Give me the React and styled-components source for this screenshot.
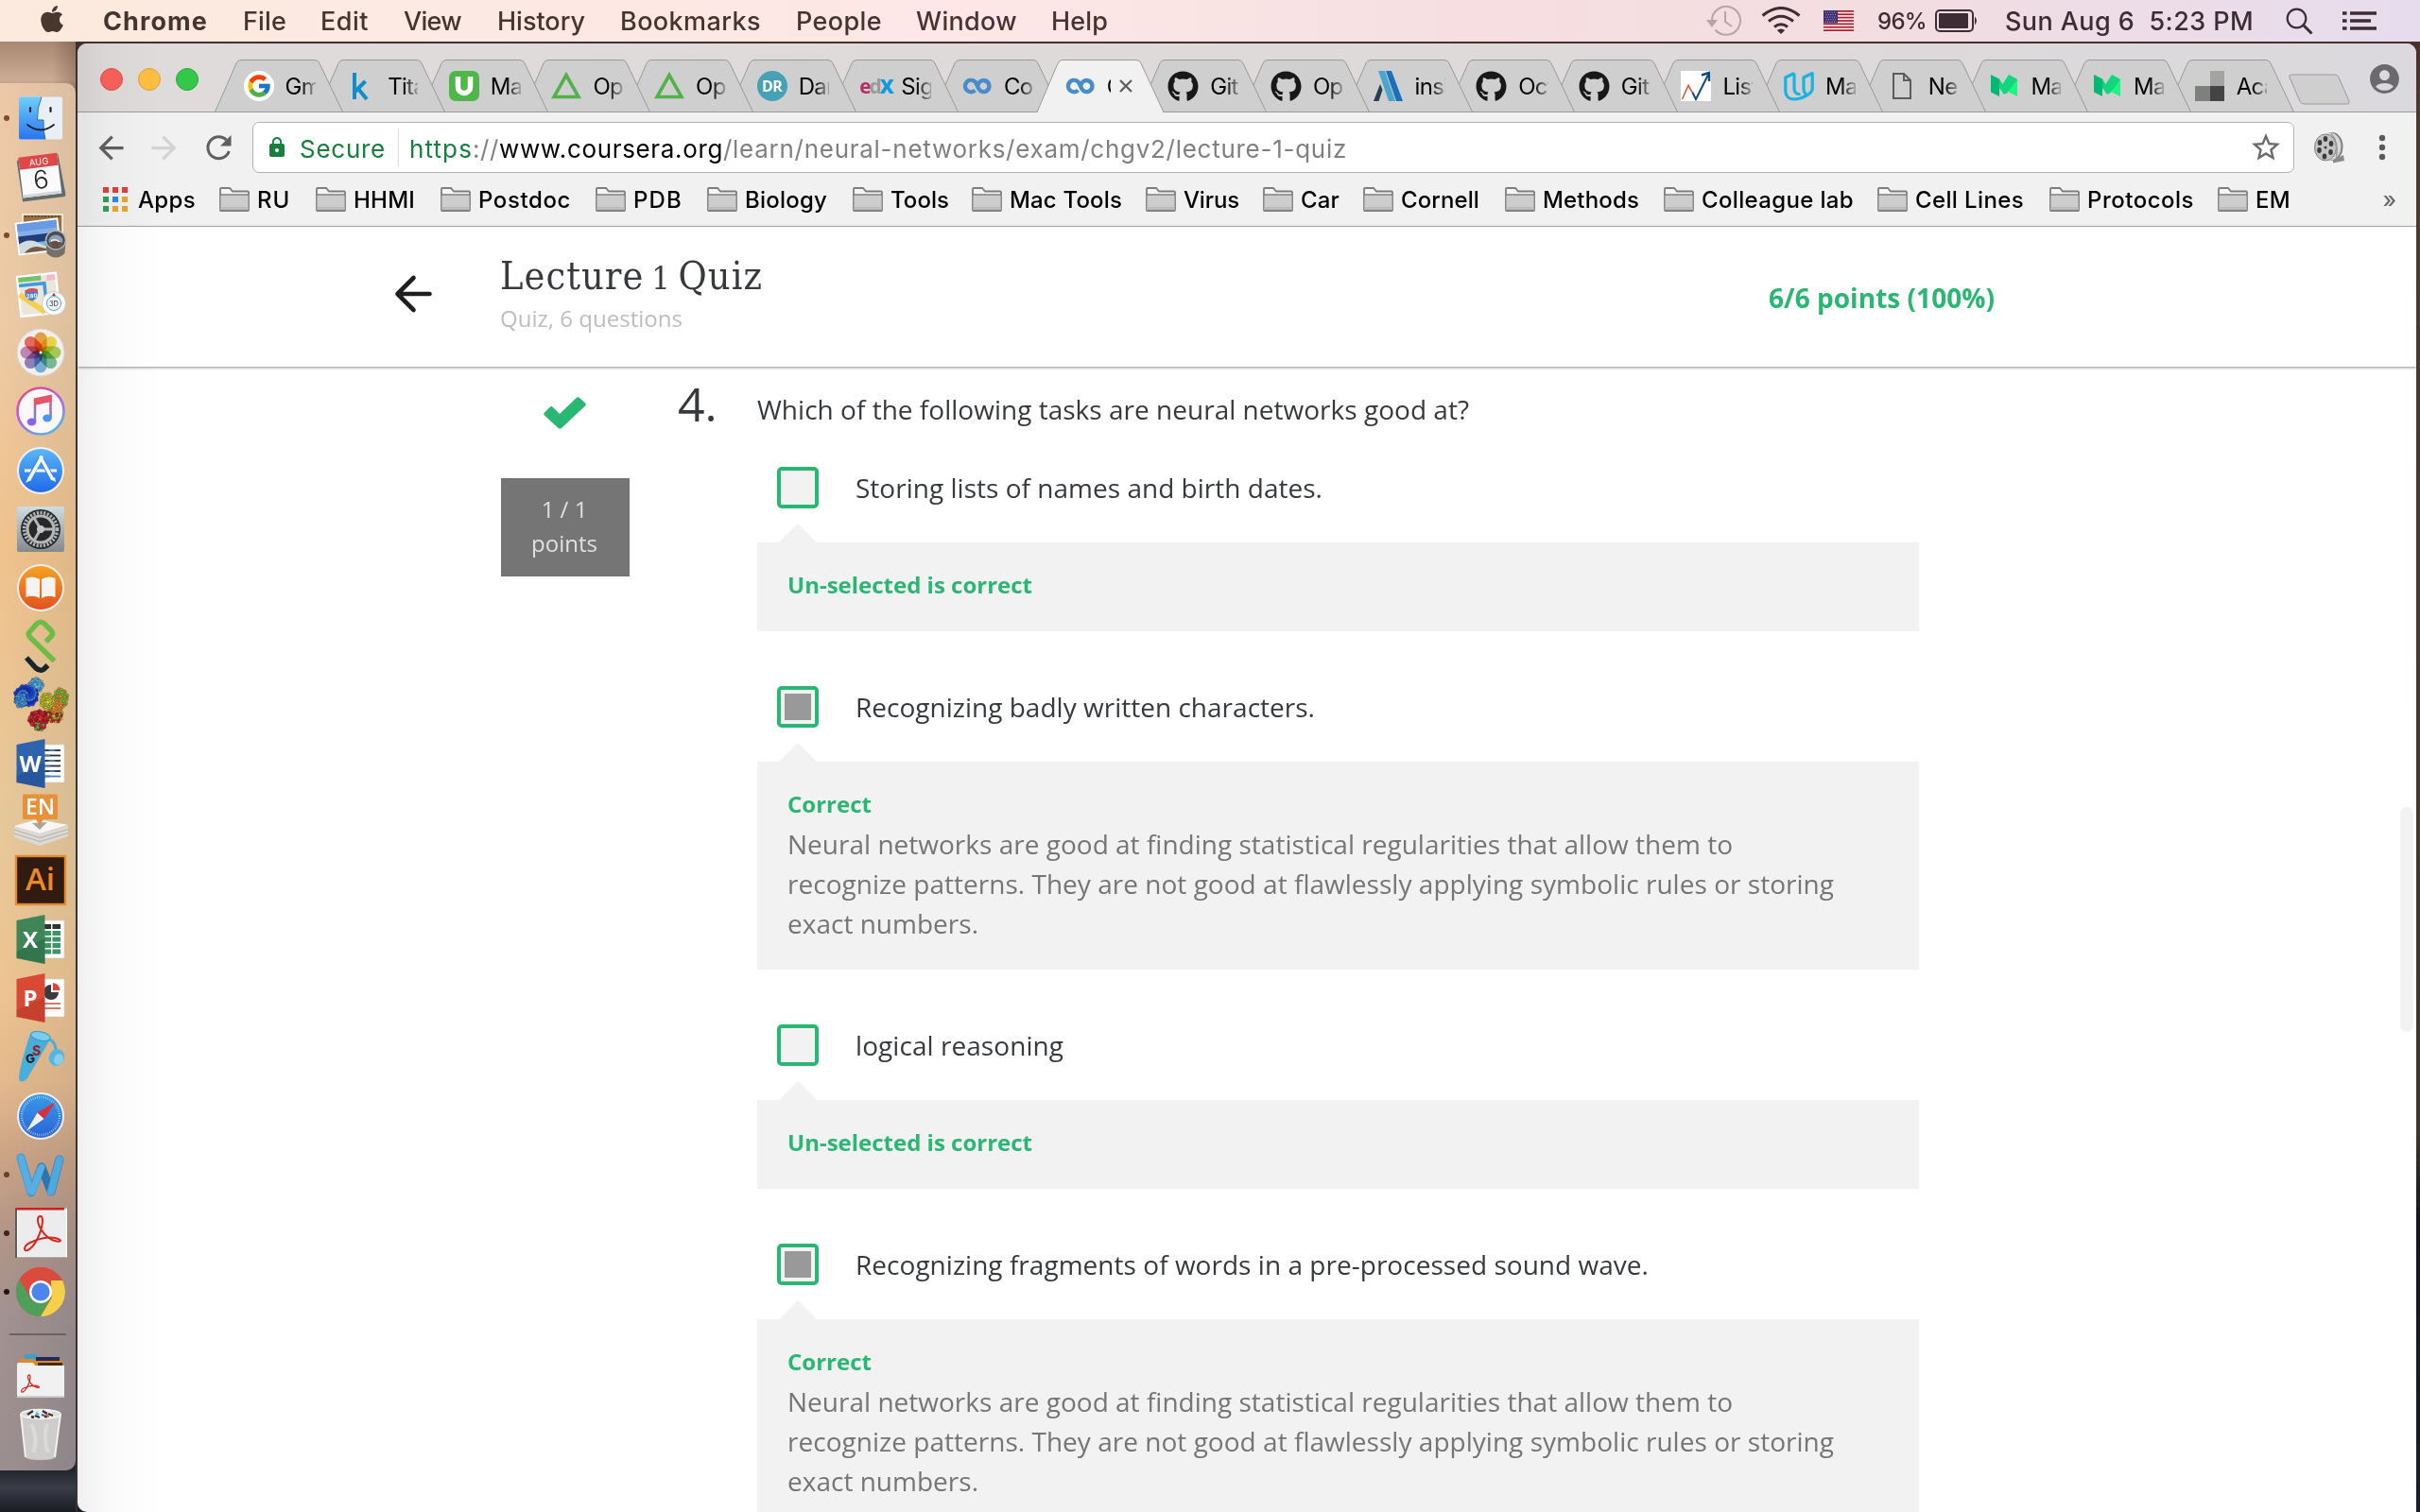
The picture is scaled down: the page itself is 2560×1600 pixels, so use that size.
import React, { useLayoutEffect, useRef } from "react";
import styled, { createGlobalStyle } from "styled-components";
import { FaApple, FaGithub } from "react-icons/fa";
import { FcGoogle } from "react-icons/fc";
import { MdStarBorder, MdAccountCircle, MdLock, MdArrowBack, MdArrowForward } from "react-icons/md";

const ui = `Inter, "Liberation Sans", sans-serif`;
const body = `"Open Sans", "Noto Sans", sans-serif`;
const green = "#2ab673";

const GlobalStyle = createGlobalStyle`
  * { box-sizing: border-box; }
  html, body { margin: 0; padding: 0; overflow: hidden; }
  svg { display: block; flex: none; }
`;

/* ---------- text that is tracked to an exact width ---------- */
const Tracked = styled.span`
  display: inline-block;
  flex: none;
  white-space: pre;
`;

function Fit({ w, children, ...rest }) {
  const ref = useRef(null);
  useLayoutEffect(() => {
    const el = ref.current;
    el.style.width = "auto";
    el.style.letterSpacing = "0px";
    const natural = el.getBoundingClientRect().width;
    el.style.letterSpacing = (w - natural) / el.textContent.length + "px";
    el.style.width = w + "px";
  }, [w, children]);
  return (
    <Tracked ref={ref} {...rest}>
      {children}
    </Tracked>
  );
}

/* ---------- desktop ---------- */
const Desktop = styled.div`
  width: 2560px;
  height: 1600px;
  overflow: hidden;
  display: flex;
  flex-direction: column;
  font-family: ${ui};
  background: linear-gradient(180deg, #46302e 0, #46302e 46px, #4a3a34 120px, #3c3630 1200px, #14161b 1290px, #1b1e26 1600px);
`;

const MenuBar = styled.header`
  height: 44px;
  flex: none;
  display: flex;
  align-items: center;
  justify-content: space-between;
  padding: 0 46px 0 42px;
  color: #48332f;
  font-size: 27px;
  background: linear-gradient(90deg, #fbeadd 0, #fdeae3 400px, #fee7e6 1000px, #f6dee0 1650px, #f2dde1 2000px, #e7dcee 2560px);
`;

const MenuItems = styled.nav`
  display: flex;
  align-items: center;
`;

const AppleMark = styled.span`
  margin: -4px 0 0 -3px;
  color: #48372f;
`;

const MenuItem = styled(Fit)`
  margin-left: ${(p) => p.$gap}px;
  font-weight: ${(p) => (p.$bold ? 700 : 500)};
`;

const StatusItems = styled.div`
  display: flex;
  align-items: center;
  color: #3e2c35;
`;

const StatusIcon = styled.span`
  margin-right: ${(p) => p.$after || 0}px;
`;

const StatusText = styled(Fit)`
  font-size: ${(p) => p.$size}px;
  margin: ${(p) => p.$margin};
  font-weight: ${(p) => p.$weight || 400};
`;

const Workspace = styled.div`
  flex: 1;
  min-height: 0;
  display: flex;
`;

/* ---------- dock ---------- */
const DockColumn = styled.aside`
  width: 82px;
  flex: none;
  padding-top: 44px;
  background: linear-gradient(90deg, rgba(60, 40, 30, 0) 55px, rgba(60, 40, 30, 0.3) 82px) top / 100% 56px no-repeat,
    linear-gradient(180deg, #a98873 0, #cbab92 40px, #a58a76 56px, #3a322e 60px, #3c3630 1180px, #0f1115 1260px, #15171c 1500px, #3a3d49 1530px, #1a1c22 1556px);
  border-right: 2px solid #3a322e;
`;

const Dock = styled.div`
  width: 80px;
  height: 1468px;
  padding-top: 6px;
  border-radius: 0 10px 10px 0;
  background: linear-gradient(90deg, rgba(255, 220, 180, 0.14), rgba(150, 150, 140, 0.16)),
    linear-gradient(180deg, #eac5a6 0, #ebc8a2 250px, #eebe86 500px, #e4c596 780px, #ebc08c 960px, #dfb386 1060px, #c29a7e 1140px, #a68a80 1220px, #94868a 1300px, #8c828a 1468px);
`;

const DockItem = styled.div`
  height: 62.1px;
`;

const DockDivider = styled.div`
  height: 2px;
  margin: 13px 10px 12px;
  background: #6f6065;
`;

/* ---------- browser window ---------- */
const Window = styled.main`
  position: relative;
  width: 2474px;
  margin-top: 2px;
  border-radius: 10px 10px 0 10px;
  overflow: hidden;
  display: flex;
  flex-direction: column;
  background: #fff;
`;

const EdgeShade = styled.div`
  position: absolute;
  inset: 0 auto 0 0;
  width: 90px;
  pointer-events: none;
  background: linear-gradient(90deg, rgba(0, 0, 0, 0.06), rgba(0, 0, 0, 0.025) 30px, rgba(0, 0, 0, 0.01) 55px, rgba(0, 0, 0, 0));
`;

const TabStrip = styled.div`
  height: 73px;
  flex: none;
  display: flex;
  padding: 17px 20px 0 24px;
  background: linear-gradient(#9b9b9b, #9b9b9b) bottom / 100% 1px no-repeat, linear-gradient(90deg, #dedbda, #dfdada 60%, #dbd9dd);
`;

const Lights = styled.div`
  display: flex;
  gap: 16px;
  width: 120.5px;
  padding-top: 9px;
`;

const Light = styled.span`
  width: 24px;
  height: 24px;
  border-radius: 50%;
  background: ${(p) => p.$color};
  border: 1px solid ${(p) => p.$edge};
`;

const TabBox = styled.div`
  position: relative;
  z-index: ${(p) => p.$z};
  width: 136px;
  height: 56px;
  margin-right: -27.37px;
  flex: none;
  display: flex;
  align-items: center;
  padding-left: 31px;
  gap: 12px;
`;

const TabShape = styled.svg`
  position: absolute;
  inset: 0;
  z-index: -1;
`;

const TabTitle = styled.span`
  width: ${(p) => p.$w || 32}px;
  overflow: hidden;
  white-space: nowrap;
  font-size: 24px;
  letter-spacing: -0.7px;
  color: #000;
  mask-image: linear-gradient(90deg, #000 ${(p) => (p.$w ? 90 : 50)}%, rgba(0, 0, 0, 0.2) 100%);
`;

const CloseIcon = styled.svg`
  margin-left: -3px;
`;

const NewTab = styled.div`
  padding: 15px 0 0 21px;
`;

const Account = styled.div`
  margin-left: auto;
  margin-right: -5px;
  padding-top: 2px;
  color: #6a6a6c;
`;

const Toolbar = styled.div`
  height: 64px;
  flex: none;
  display: flex;
  align-items: center;
  padding: 10px 0 0 16px;
  background: #f1f1f1;
`;

const NavIcon = styled.span`
  width: ${(p) => p.$w}px;
  padding-left: ${(p) => p.$inset || 0}px;
  flex: none;
  color: ${(p) => p.$color};
`;

const Omnibox = styled.div`
  width: 2160px;
  height: 54px;
  flex: none;
  display: flex;
  align-items: center;
  padding: 0 11px 0 13px;
  border: 1px solid #b2b2b2;
  border-radius: 7px;
  background: #fff;
  font-size: 26px;
`;

const Secure = styled(Fit)`
  margin: 2px 13px 0 12px;
  color: #17803f;
`;

const Separator = styled.span`
  width: 1px;
  height: 40px;
  margin-right: 11px;
  background: #ddd;
`;

const UrlPart = styled(Fit)`
  margin-top: 2px;
  color: ${(p) => p.$color};
`;

const StarWrap = styled.span`
  margin-left: auto;
  color: #6b6b6b;
`;

const BookmarkBar = styled.div`
  height: 57px;
  flex: none;
  display: flex;
  align-items: center;
  padding-left: 27px;
  background: #f1f1f1;
  border-bottom: 1px solid #b2b2b2;
  font-size: 24px;
  font-weight: 500;
  color: #000;
`;

const Bookmark = styled.div`
  display: flex;
  align-items: center;
  gap: ${(p) => p.$gap || 8}px;
  width: ${(p) => p.$w}px;
  flex: none;
`;

const More = styled.span`
  margin-left: auto;
  padding-right: 21px;
  font-size: 24px;
  color: #6b6b6b;
`;

/* ---------- quiz page ---------- */
const PageHeader = styled.section`
  position: relative;
  height: 148px;
  flex: none;
  display: flex;
  padding-left: 335px;
  font-family: ${body};
  background: #fff;
  box-shadow: 0 1px 3px rgba(0, 0, 0, 0.45);
`;

const BackArrow = styled.div`
  width: 112px;
  padding-top: 50px;
`;

const Titles = styled.div`
  width: 1342px;
  padding-top: 25px;
`;

const Title = styled.h1`
  margin: 0;
  height: 55px;
  line-height: 55px;
  font-family: "DejaVu Serif Condensed", "DejaVu Serif", serif;
  font-stretch: condensed;
  font-weight: 400;
  font-size: 41px;
  word-spacing: -5px;
  color: #373a3c;

  small { font-size: 34px; }
`;

const Subtitle = styled.div`
  line-height: 34px;
  font-size: 24px;
  color: #bdbdbd;
`;

const Score = styled.div`
  padding-top: 54px;
  line-height: 42px;
  font-size: 28px;
  font-weight: 700;
  color: ${green};
`;

const Quiz = styled.section`
  flex: 1;
  min-height: 0;
  display: grid;
  grid-template-columns: 136px 51px 84px 1229px;
  padding-left: 448px;
  font-family: ${body};
  color: #373a3c;
`;

const Grade = styled.div`
  padding-top: 32px;
`;

const GradeMark = styled.div`
  height: 86px;
  padding-left: 44px;
`;

const Points = styled.div`
  height: 104px;
  padding: 15px 2px 0 0;
  line-height: 36px;
  font-size: 24px;
  text-align: center;
  color: #e0e0e0;
  background: #757575;
`;

const Number = styled.div`
  grid-column: 3;
  padding-top: 9px;
  line-height: 60px;
  font-size: 50px;
`;

const Question = styled.div`
  padding-top: 24px;
`;

const Prompt = styled.p`
  margin: 0 0 40px;
  line-height: 42px;
  font-size: 28px;
`;

const Option = styled.div`
  display: flex;
  align-items: center;
  height: 44px;
  margin-bottom: 16px;
  padding-left: 21px;
  gap: 39px;
  font-size: 28px;
  line-height: 46px;
`;

const Check = styled.span`
  width: 44px;
  height: 44px;
  padding: 4px;
  border: 4px solid ${green};
  border-radius: 5px;
  background: ${(p) => (p.$on ? "#999" : "#f2f2f2")};
  background-clip: ${(p) => (p.$on ? "content-box" : "padding-box")};
  box-shadow: ${(p) => (p.$on ? "inset 0 0 0 4px #f2f2f2" : "none")};
`;

const Pointer = styled.div`
  width: 40px;
  height: 20px;
  margin-left: 23px;
  background: #f2f2f2;
  clip-path: polygon(50% 0, 100% 100%, 0 100%);
`;

const Feedback = styled.div`
  padding: 24px 34px 28px 32px;
  margin-bottom: 58px;
  background: #f2f2f2;
  line-height: 42px;
  font-size: 28px;
  color: #757575;
`;

const Verdict = styled.div`
  height: 42px;
  font-size: 24px;
  font-weight: 700;
  color: ${green};
`;

const Line = styled.div`
  height: 42px;
`;

const ScrollThumb = styled.div`
  position: absolute;
  right: 3px;
  top: 808px;
  width: 14px;
  height: 238px;
  border-radius: 7px;
  background: #f2f2f2;
`;

/* ---------- favicons ---------- */
const Fav = ({ children }) => (
  <svg width="32" height="32" viewBox="0 0 32 32">{children}</svg>
);

const Google = () => (
  <Fav>
    <circle cx="16" cy="16" r="16" fill="#fff" />
    <g transform="translate(2 2)"><FcGoogle size={28} /></g>
  </Fav>
);
const Kaggle = () => (
  <Fav>
    <path d="M9 2v28M9.500 22 L20.500 11M13 19 L22 30" stroke="#0e8fcb" strokeWidth="4" fill="none" />
  </Fav>
);
const Upwork = () => (
  <Fav>
    <rect width="32" height="32" rx="7" fill="#4fb748" />
    <path d="M9.500 6v11a6.500 6.500 0 0 0 13 0V6" stroke="#fff" strokeWidth="5.500" fill="none" />
  </Fav>
);
const Triangle = () => (
  <Fav>
    <path d="M16 4.500 L29 27.500 H3 Z" stroke="#53b04c" strokeWidth="3.600" fill="none" />
  </Fav>
);
const FavText = styled.span`
  width: 32px;
  height: 32px;
  border-radius: 50%;
  flex: none;
  background: #45a1b6;
  color: #fff;
  font: 700 16px/32px ${body};
  text-align: center;
  letter-spacing: -0.5px;
`;
const EdxText = styled.span`
  width: 32px;
  flex: none;
  font: 700 21px/32px ${body};
  letter-spacing: -2.2px;
  white-space: nowrap;
  color: #b52a67;

  i { font-style: normal; color: #9a9a9a; }
  b { color: #1599dd; }
`;
const Coursera = () => (
  <Fav>
    <path d="M13.500 20.500 A6.200 6.200 0 1 1 12.500 10.800 C16 12 15.500 20 20.500 21.800 A6 6 0 1 0 19 11.200 C17.500 12.500 17 13.500 16.500 15" stroke="#4a8cc9" strokeWidth="4.400" fill="none" />
  </Fav>
);
const Github = () => <FaGithub size={33} color="#181818" />;
const Insight = () => (
  <Fav>
    <path d="M5 0h7l11 32h-7z" fill="#4aa6cf" />
    <path d="M13 0h6l12 32h-7z" fill="#1d6fb8" />
    <path d="M0 32 L7 14 L9.500 20 L5.500 32z" fill="#2b3e50" />
  </Fav>
);
const Chart = () => (
  <Fav>
    <rect width="32" height="32" fill="#fff" />
    <path d="M1.500 30 L8 15.500 L13 24" stroke="#e0542f" strokeWidth="1.500" fill="none" />
    <path d="M12.500 23 L16 30 L29 4" stroke="#124a7d" strokeWidth="2" fill="none" />
    <path d="M22 4.500 L30 2 L30 11" stroke="#124a7d" strokeWidth="2.500" fill="none" />
  </Fav>
);
const Udacity = () => (
  <Fav>
    <path d="M11 2.500 L1.800 7 V21 C1.800 27 6 30 11 30 C19 30 30.200 24 30.200 19 V2.500 L21 7 V19 C21 22 22.500 24 24 25 M11 2.500 V19 C11 23 14 25 17.500 24.500" stroke="#19b2e2" strokeWidth="3.200" strokeLinejoin="round" fill="none" />
  </Fav>
);
const Doc = () => (
  <Fav>
    <path d="M7 3h11l7 7v19H7z M18 3v7h7" stroke="#5c5c5c" strokeWidth="2" fill="none" />
  </Fav>
);
const Medium = () => (
  <Fav>
    <path d="M2 4 L11 8.500 V27 L2 22.500z" fill="#02b875" />
    <path d="M21 4 L30 9 V27 L21 22.500z" fill="#1cf77f" />
    <path d="M11 8.500 L20 23 L16 25 L11 18z M21 4 L30 9 L19.500 23 L14.500 14z" fill="#12d67b" />
  </Fav>
);
const Pixels = () => (
  <Fav>
    <rect x="16" width="15" height="16" fill="#a3a4a2" />
    <rect y="16" width="16" height="16" fill="#7e807d" />
    <rect x="16" y="16" width="15" height="16" fill="#444" />
  </Fav>
);
const DR = () => <FavText>DR</FavText>;
const Edx = () => <EdxText>e<i>d</i><b>X</b></EdxText>;

const tabs = [
  [Google, "Gm"], [Kaggle, "Tita"], [Upwork, "Ma"], [Triangle, "Op"], [Triangle, "Op"],
  [DR, "Dar"], [Edx, "Sig"], [Coursera, "Co"], [Coursera, "C", true], [Github, "Git"],
  [Github, "Op"], [Insight, "insi"], [Github, "Oct"], [Github, "Git"], [Chart, "List"],
  [Udacity, "Ma"], [Doc, "Ne"], [Medium, "Ma"], [Medium, "Ma"], [Pixels, "Aca"],
];

function Tab({ icon: Icon, title, active, z }) {
  return (
    <TabBox $z={z}>
      <TabShape width="136" height="56" viewBox="0 0 136 56">
        <path
          d={`M0.500 ${active ? 57 : 55.5} L23 4 Q24.500 0.500 28 0.500 H106 Q109.500 0.500 111 4 L135.500 ${active ? 57 : 55.5}${active ? "" : "z"}`}
          fill={active ? "#f1f1f1" : "#cfcfcf"}
          stroke="#999"
        />
      </TabShape>
      <Icon />
      {active ? (
        <>
          <TabTitle $w={4}>{title}</TabTitle>
          <CloseIcon width="14" height="16" viewBox="0 0 14 16">
            <path d="M1 2 L13 14 M13 2 L1 14" stroke="#5c5c5c" strokeWidth="2.200" />
          </CloseIcon>
        </>
      ) : (
        <TabTitle>{title}</TabTitle>
      )}
    </TabBox>
  );
}

const ReloadIcon = () => (
  <svg width="40" height="40" viewBox="0 0 40 40">
    <path d="M28.500 12 A11.500 11.500 0 1 0 31.300 24" stroke="#5f5f5f" strokeWidth="3" fill="none" />
    <path d="M33.500 7 V18.500 H22z" fill="#5f5f5f" />
  </svg>
);

const FolderIcon = () => (
  <svg width="32" height="26" viewBox="0 0 32 26">
    <path d="M1 24.500V2q0-1 1-1h9l3 3.500h16q1 0 1 1v19q0 .5-1 .5H2q-1 0-1-.500z" fill="#f6f6f6" stroke="#7d7d7d" strokeWidth="1.800" />
    <path d="M1.500 8.500h29v16h-29z" fill="#cdcdcd" />
    <path d="M1.500 21h29v3h-29z" fill="#bcbcbc" />
    <path d="M1 8h30M1 25h30" stroke="#7d7d7d" strokeWidth="1.700" />
  </svg>
);

const AppsIcon = () => {
  const c = ["#ea3a35", "#ea3a35", "#ea3a35", "#2f9e58", "#2a8af0", "#eda22c", "#2f9e58", "#eda22c", "#eda22c"];
  return (
    <svg width="26" height="26" viewBox="0 0 26 26">
      {c.map((f, i) => (
        <rect key={i} x={(i % 3) * 10} y={Math.floor(i / 3) * 10} width="6" height="6" fill={f} />
      ))}
    </svg>
  );
};

/* name, text width, distance to the next folder */
const folders = [
  ["RU", 35, 102], ["HHMI", 65, 132], ["Postdoc", 98, 164], ["PDB", 52, 118], ["Biology", 87, 154],
  ["Tools", 62, 126], ["Mac Tools", 119, 184], ["Virus", 59, 124], ["Car", 41, 106], ["Cornell", 83, 150],
  ["Methods", 102, 168], ["Colleague lab", 161, 226], ["Cell Lines", 115, 182], ["Protocols", 113, 178], ["EM", 37, 90],
];

const ReelIcon = () => (
  <svg width="32" height="34" viewBox="0 0 32 34">
    <ellipse cx="19" cy="16" rx="11.500" ry="15" fill="#7d7d7d" />
    <path d="M20 30 L31 25 L32 31 L20 33.500z" fill="#8a8a8a" />
    <ellipse cx="17" cy="16" rx="11.500" ry="14.500" fill="#d8d8d8" />
    <ellipse cx="12" cy="17" rx="11.500" ry="14" fill="#c4c4c4" stroke="#808080" />
    {[[12, 8], [18, 13], [17.5, 22], [11, 26.5], [5.500, 20], [6, 12]].map(([x, y]) => (
      <ellipse key={x + "-" + y} cx={x} cy={y} rx="2.300" ry="3" fill="#3b3b3b" />
    ))}
    <circle cx="12" cy="17" r="1.600" fill="#444" />
    <path d="M18 2.500 q8 8 5.500 25" stroke="#999" strokeWidth="1.500" fill="none" />
  </svg>
);

/* ---------- dock artwork, one 80x62 cell each ---------- */
const office = (color, dark, letter, page) => (
  <g>
    <path d="M46 11 h22 v40 h-22z" fill="#fff" stroke="#ccc" strokeWidth=".7" />
    {page}
    <path d="M17.500 11 L47.500 5 V57 L17.500 51z" fill={color} />
    <path d="M17.500 44 L47.500 30 V57 L17.500 51z" fill={dark} opacity=".35" />
    <text x="32" y="40" textAnchor="middle" fontFamily="Open Sans, sans-serif" fontWeight="700" fontSize="24" fill="#fff">{letter}</text>
  </g>
);

const swoosh = "M0 -18 C3 -18 3 -8 -3 5 C-8 16 -17 22 -17 16 C-17 10 4 3 15 5 C24 7 22 10 15 8 C4 5 -3 -8 -3 -14 C-3 -17 -2 -18 0 -18z";

const petals = ["#f39a2b", "#f4dc33", "#a3cf46", "#67bd8b", "#6aaee0", "#8377bd", "#c27bb5", "#ec5b50"];

/* protein surface: clusters of overlapping beads, [cx, cy, rx, ry, count, colours] */
const clusters = [
  [38, 10, 7, 7, 34, ["#5bb0dc", "#3f93cf", "#6cc0e2"]],
  [28, 21, 12, 11, 70, ["#1a3be0", "#2453d8", "#3c86d6", "#1730b8"]],
  [22, 26, 6, 7, 22, ["#4aa0d8", "#3a80cc"]],
  [41, 46, 10, 9, 60, ["#c8202a", "#a8161e", "#e03a32"]],
  [42, 54, 5, 4, 12, ["#4cc040", "#c8202a"]],
  [58, 42, 8, 7, 34, ["#d2392a", "#b02020", "#9cc030"]],
  [64, 24, 7, 10, 46, ["#6cbc2e", "#8cc832", "#e08a2a"]],
  [58, 32, 8, 7, 34, ["#e0812a", "#d8a02c"]],
  [50, 27, 7, 8, 40, ["#c8c22c", "#b0b028", "#dcd23a"]],
];
const beads = clusters.flatMap(([cx, cy, rx, ry, n, colors], k) =>
  Array.from({ length: n }, (_, i) => {
    const a = i * 2.39996 + k;
    const r = Math.sqrt((n - i) / n);
    return { x: cx + Math.cos(a) * rx * r, y: cy + Math.sin(a) * ry * r, c: colors[(i * 7 + k) % colors.length], key: `${k}-${i}` };
  })
);

const dockIcons = [
  { dot: "#7a4c28", art: (
    <g>
      <rect x="20" y="8.500" width="46" height="45" rx="2" fill="#e8eff6" />
      <path d="M22 8.500 H44 Q39 20 39.500 33 H46 Q45.500 44 48 53.500 H22 Q20 53.500 20 51.500 V10.500 Q20 8.500 22 8.500z" fill="url(#finder)" />
      <path d="M44 8.500 Q39 20 39.500 33 H46 Q45.500 44 48 53.500" stroke="#2a6aa8" strokeWidth="1" fill="none" />
      <path d="M32 20v4M53.500 20v4" stroke="#18222e" strokeWidth="2.200" strokeLinecap="round" />
      <path d="M29 38 Q43 49 57 38" stroke="#18222e" strokeWidth="1.800" fill="none" strokeLinecap="round" />
    </g>) },
  { art: (
    <g transform="rotate(-7 43 31)">
      <path d="M20 12 L22 9 H64 L67 52 L66 55 H21z" fill="#5d6d70" />
      <rect x="22" y="9" width="41" height="42" fill="#fafafa" />
      <path d="M22 48 H63 V51 H22z" fill="#d5d5d5" />
      <rect x="22" y="8" width="41" height="13" fill="#e04848" />
      <text x="43" y="18.500" textAnchor="middle" fontFamily="Inter, sans-serif" fontSize="9.500" fill="#fff">AUG</text>
      <text x="43" y="43.500" textAnchor="middle" fontFamily="Inter, sans-serif" fontWeight="300" fontSize="27" fill="#222">6</text>
    </g>) },
  { dot: "#7a4c28", art: (
    <g>
      <rect x="24" y="9" width="42" height="36" fill="#9a7440" stroke="#f4f4f4" strokeWidth="1.500" />
      <path d="M26 11 H64" stroke="#5f4526" strokeWidth="2" strokeDasharray="2 1.500" />
      <g transform="rotate(-7 40 33)">
        <rect x="18.500" y="16" width="44" height="33" fill="#86b0ea" stroke="#fff" strokeWidth="2" />
        <rect x="19.500" y="17" width="42" height="8" fill="#6a9ae4" />
        <rect x="19.500" y="30" width="42" height="8" fill="#1f3f7c" />
        <path d="M19.500 38 q12 -6 22 2 t20 0 v8 h-42z" fill="#cfdde0" />
        <path d="M24 48 q8 -8 18 -4 t19 2 v2z" fill="#7a5a40" />
      </g>
      <path d="M48.500 38 h21 l-1 12 q-9.500 9 -19 0z" fill="#75706c" />
      <ellipse cx="59" cy="36" rx="10.500" ry="10" fill="#4a4c50" stroke="#b4b4b4" strokeWidth="1.500" />
      <ellipse cx="59" cy="37" rx="7.500" ry="6.500" fill="#8aa3ba" />
      <path d="M52 39 q7 -4 14 0 q-7 9 -14 0" fill="#6b4c3a" />
      <path d="M54 37 q5 -3 9 1" stroke="#e8eef2" strokeWidth="1.500" fill="none" />
    </g>) },
  { art: (
    <g>
      <g transform="rotate(-6 40 31)">
        <rect x="20" y="11" width="41" height="42" fill="#ece6d8" stroke="#fff" strokeWidth="2.500" />
        <path d="M21 12 h24 v5 h-24z" fill="#72c267" />
        <path d="M51 12 h9 v6 h-9z" fill="#f0bccb" />
        <path d="M21 20.500 H48 V51" stroke="#3d9be6" strokeWidth="3.500" fill="none" />
        <path d="M21 30 L46 51" stroke="#f5cf4e" strokeWidth="6" />
        <path d="M27 26 q6 -3 13 0 q2 9 -6.500 12 q-9 -3 -6.500 -12z" fill="#4a7fd6" />
        <path d="M27 26 q6 -3 13 0 v2.500 h-13z" fill="#d85050" />
        <text x="33.500" y="34.500" textAnchor="middle" fontFamily="Inter, sans-serif" fontWeight="700" fontSize="6" fill="#fff">280</text>
      </g>
      <circle cx="57" cy="41" r="12.500" fill="#fafafa" stroke="#ccc" />
      <circle cx="57" cy="41" r="7.500" fill="#f2f6f8" stroke="#5fa3bf" />
      <path d="M57 29.500 l1.800 3.500 h-3.600z" fill="#d02525" />
      <text x="57" y="44" textAnchor="middle" fontFamily="Inter, sans-serif" fontSize="7.500" fill="#333">3D</text>
    </g>) },
  { art: (
    <g>
      <circle cx="43" cy="31" r="25" fill="#f1efee" stroke="#d5d5d5" />
      {petals.map((c, i) => (
        <rect key={c} x="36.500" y="9.500" width="13" height="21.500" rx="6.500" fill={c} opacity=".86" transform={`rotate(${i * 45} 43 31)`} style={{ mixBlendMode: "multiply" }} />
      ))}
      <circle cx="43" cy="31" r="1.500" fill="#fff" />
    </g>) },
  { art: (
    <g>
      <circle cx="43" cy="31" r="24.500" fill="#fbf8fb" stroke="url(#itunes)" strokeWidth="2.600" />
      <path d="M37 42 V18.500 L53.500 15 V38" stroke="url(#note)" strokeWidth="2.500" fill="none" />
      <path d="M36 18 L54.500 14.500 V21 L36 25z" fill="#e8546a" />
      <ellipse cx="33.500" cy="42.500" rx="4.800" ry="4" fill="#8a63ee" />
      <ellipse cx="50" cy="38.500" rx="4.800" ry="4" fill="#4f97ee" />
    </g>) },
  { art: (
    <g>
      <circle cx="43" cy="31" r="24" fill="url(#store)" stroke="#f1f1f1" strokeWidth="2" />
      <path d="M26 31 H60" stroke="#fff" strokeWidth="3.200" />
      <path d="M44 16 L30 41 M43 17 L56 41" stroke="#3a88ea" strokeWidth="5.500" />
      <path d="M44 17 L31 40 M43 17 L55 39" stroke="#f4f8fd" strokeWidth="3.600" strokeLinecap="round" />
      <path d="M30 38 L27 44 L33 41z M53 40 L59 43 L58 38z" fill="#f4f8fd" />
    </g>) },
  { art: (
    <g>
      <rect x="18" y="7" width="50" height="48" rx="2" fill="url(#pref)" />
      <circle cx="43" cy="31" r="21" fill="#26282a" />
      <circle cx="43" cy="31" r="17.500" fill="none" stroke="#b4b6b8" strokeWidth="3.600" strokeDasharray="2.200 1.500" />
      <circle cx="43" cy="31" r="14" fill="none" stroke="#b4b6b8" strokeWidth="3.200" />
      <path d="M43 31 L57 31 M43 31 L36 19 M43 31 L36 43" stroke="#b4b6b8" strokeWidth="3" />
      <circle cx="43" cy="31" r="4" fill="#c4c6c8" />
    </g>) },
  { art: (
    <g>
      <circle cx="43" cy="31" r="24" fill="url(#books)" stroke="#f3eeee" strokeWidth="2" />
      <path d="M42 22 Q35 17.500 27.500 21 V41 Q35 38 42 42z M44 22 Q51 17.500 58.500 21 V41 Q51 38 44 42z" fill="#f6f4f3" />
    </g>) },
  { art: (
    <g fill="none" strokeWidth="5.500">
      <path d="M57.500 46.500 L31.500 21 Q29 18 31.500 15.500 L39 7 Q43 3.500 47 7 L54 14 Q57 18 54 20.500 L48.500 26" stroke="#6cbd45" strokeLinejoin="round" />
      <path d="M28 43 L38 54 Q43 58 46.500 55 L50.500 51" stroke="#16252e" />
    </g>) },
  { art: (
    <g stroke="#10142a" strokeWidth=".35" strokeOpacity=".75">
      {beads.map((b) => (
        <circle key={b.key} cx={b.x} cy={b.y} r="2" fill={b.c} />
      ))}
    </g>) },
  { art: office("#2f63ae", "#173f82", "W", (
    <g strokeWidth="1.800">
      {[17, 22.5, 28, 33.5, 39, 44.5].map((y, i) => (
        <g key={y}>
          <path d={`M47 ${y} H64`} stroke={i === 5 ? "#4a7dc9" : "#2a2e38"} />
          <path d={`M${i % 2 ? 47 : 52} ${y} h6`} stroke="#4a7dc9" />
        </g>
      ))}
    </g>)) },
  { art: (
    <g>
      <path d="M15 35 L42 43 L72 35 V46 L42 56 L15 47z" fill="#dcd9d4" />
      <path d="M15 35 L40 28 L72 34 L42 43z" fill="#f7f6f4" />
      <path d="M34 32 L50 31 L42 39z" fill="#a9a6a2" />
      <path d="M15 39 L42 47.500 L72 38.500 M15 43 L42 51.500 L72 42.500" stroke="#b4b0aa" fill="none" />
      <path d="M25 1.500 H59 Q61 1.500 61 3.500 V26 Q61 28 59 28 H46 L42 34.500 L38 28 H25 Q24 28 24 26 V3.500 Q24 1.500 25 1.500z" fill="#e8903a" />
      <text x="42.500" y="23" textAnchor="middle" fontFamily="Open Sans, sans-serif" fontWeight="600" fontSize="23" fill="#fff">EN</text>
    </g>) },
  { art: (
    <g>
      <rect x="17" y="5" width="52" height="51" fill="#311a10" stroke="#e38a2e" strokeWidth="2.400" />
      <text x="42.500" y="40.500" textAnchor="middle" fontFamily="Open Sans, sans-serif" fontWeight="600" fontSize="33" fill="#e98b27">Ai</text>
    </g>) },
  { art: office("#3f8558", "#1e5c38", "X", (
    <g>
      {[15, 22, 28.5, 35, 41.5].map((y, i) => (
        <g key={y} fill={i ? "#3f9464" : "#2c3430"}>
          <rect x="46" y={y} width="8" height="5" />
          <rect x="55.500" y={y} width="8.500" height="5" />
        </g>
      ))}
    </g>)) },
  { art: office("#d84a36", "#a82a1c", "P", (
    <g>
      <circle cx="54" cy="25" r="8" fill="#3a3a3c" />
      <path d="M54 25 V16 H63 V25z" fill="#fff" />
      <path d="M56 23 V15 A8 8 0 0 1 63.500 23z" fill="#d84a36" />
      <path d="M47 37 H64 M47 42 H64" stroke="#d84a36" strokeWidth="1.600" />
    </g>)) },
  { art: (
    <g>
      <path d="M32 6 L53 12 L29 53 Q22 60 20 54 Q20 42 32 6z" fill="#4aaedb" />
      <ellipse cx="43" cy="8.500" rx="10.500" ry="4.500" fill="#7accec" transform="rotate(12 43 8.500)" stroke="#3598c4" />
      <path d="M52 12 Q59 14 59 24" stroke="#4aaedb" strokeWidth="3" fill="none" />
      <ellipse cx="60" cy="31" rx="8" ry="9" fill="#55b5de" transform="rotate(25 60 31)" />
      <ellipse cx="62" cy="33" rx="5" ry="6" fill="#84cfea" transform="rotate(25 62 33)" />
      <text x="27" y="37" fontFamily="Inter, sans-serif" fontWeight="800" fontSize="13" fill="#222" transform="rotate(-15 32 32)">G</text>
      <text x="34" y="29" fontFamily="Inter, sans-serif" fontWeight="800" fontSize="14" fill="#9c2026">S</text>
    </g>) },
  { art: (
    <g>
      <circle cx="43" cy="31" r="24" fill="url(#safari)" stroke="#eee" strokeWidth="2" />
      <circle cx="43" cy="31" r="20" fill="none" stroke="#b5dcf8" strokeWidth="2.500" strokeDasharray=".7 1.600" />
      <path d="M59 16 L46.500 34 L39.500 27.500z" fill="#dd2d38" />
      <path d="M28 47 L39.500 27.500 L46.500 34z" fill="#f0eeee" />
    </g>) },
  { dot: "#6b4325", art: (
    <g fill="none" strokeLinejoin="round" strokeLinecap="round">
      <path d="M22 13 L33 50 L44 23" stroke="#3f97d0" strokeWidth="9" />
      <path d="M44 23 L54 49 L63 15" stroke="#2a76b2" strokeWidth="9" />
      <path d="M54 49 L63 15" stroke="#4fa8de" strokeWidth="8" />
      <path d="M34 49 L44 23" stroke="#58aee2" strokeWidth="7" />
      <path d="M22 13 L32 48" stroke="#56aee4" strokeWidth="7" />
    </g>) },
  { dot: "#3f2618", art: (
    <g>
      <rect x="16" y="4" width="54" height="53" fill="#5d5b5b" />
      <rect x="18.500" y="5" width="52" height="51" fill="#ececec" stroke="#fff" />
      <path d="M17 4 H68 V6.500 H17z" fill="#d01f1f" />
      <path d={swoosh} transform="translate(43 31)" stroke="#d3281f" strokeWidth="2" fill="none" />
    </g>) },
  { dot: "#241410", art: (
    <g transform="translate(43 31)">
      <circle r="26" fill="#da4b3e" />
      <path d="M0 0 L-22.500 -13 A26 26 0 0 0 0 26 L11 6z" fill="#4f9f5b" />
      <path d="M0 26 L11.500 6.500 L11 -12 H23 A26 26 0 0 1 0 26z" fill="#f6cf4b" />
      <path d="M-22.500 -13 A26 26 0 0 1 23 -12 H0 L-11 6z" fill="#da4b3e" />
      <circle r="12" fill="#fff" />
      <circle r="9.600" fill="#4a86ec" />
    </g>) },
];

const dockTail = [
  <g key="folder">
    <path d="M26 8 H38 L40 11 H63 V26 H26z" fill="#3d9fd0" />
    <path d="M38 11 H63 V16 H38z" fill="#1b2b5e" />
    <path d="M20 13 H36 L38 15 H66 V28 H20z" fill="#dd8a2b" />
    <path d="M40 17 H66 V20 H40z" fill="#4a2a14" />
    <path d="M18 19 Q18 17 20 17 H34 Q36 17 37 20 H68 V54 H18z" fill="#f1f1f1" />
    <path d="M18 53 H68" stroke="#aaa" />
    <path d={swoosh} transform="translate(31 39) scale(.5)" stroke="#d3281f" strokeWidth="2.600" fill="none" />
  </g>,
  <g key="trash">
    <path d="M22 9 L27 55 Q28 58 43 58 Q57 58 58 55 L64 9z" fill="#cfcdcc" />
    <path d="M22 9 L27 55 M64 9 L58 55" stroke="#f1f1f1" strokeWidth="2" />
    <ellipse cx="43" cy="9.500" rx="21" ry="5" fill="#dcdcdc" stroke="#f3f3f3" strokeWidth="1.500" />
    <path d="M28 11 l5 -7 7 3 4 -3 8 1 6 6 -9 4 -14 0z" fill="#efefef" />
    <path d="M29 10 l6 -4 M45 6 l5 3 M37 11 l5 2 M51 9 l5 2 M33 12 l3 1 M47 12 l3 0" stroke="#333" strokeWidth="2.400" />
    <path d="M38 8 l3 2" stroke="#3ac0d0" strokeWidth="2.500" />
    <path d="M48 10 l4 2" stroke="#c86a30" strokeWidth="2" />
    <path d="M44 10 l3 1" stroke="#3556b0" strokeWidth="2" />
    <path d="M33 20 q8 14 2 30 M50 20 q-5 14 1 30" stroke="#e4e2e0" strokeWidth="4" fill="none" opacity=".6" />
  </g>,
];

const GradientDefs = styled.svg`
  position: absolute;
`;

const Gradients = () => (
  <GradientDefs width="0" height="0">
    <defs>
      {[
        ["finder", "#6fd0fb", "#2a74ee"], ["itunes", "#ee4a62", "#5aaef0"], ["note", "#e8546a", "#5a8cf0"],
        ["store", "#5bb8f7", "#1f68e8"], ["pref", "#cfdde2", "#85898e"], ["books", "#f6a325", "#e2501c"],
        ["safari", "#3a9be8", "#2a62d6"],
      ].map(([id, a, b]) => (
        <linearGradient key={id} id={id} x1="0" y1="0" x2={id === "itunes" ? ".6" : "0"} y2="1">
          <stop offset="0" stopColor={a} />
          {id === "itunes" && <stop offset=".55" stopColor="#b45fe6" />}
          <stop offset="1" stopColor={b} />
        </linearGradient>
      ))}
    </defs>
  </GradientDefs>
);

const DockArt = ({ dot, children }) => (
  <DockItem>
    <svg width="80" height="62" viewBox="0 0 80 62">
      {dot && <circle cx="7" cy="31" r="3" fill={dot} />}
      {children}
    </svg>
  </DockItem>
);

/* ---------- status icons ---------- */
const TimeMachine = () => (
  <svg width="38" height="34" viewBox="0 0 38 34" opacity=".32">
    <path d="M6 17 A15 15 0 1 1 9.500 26.500" stroke="#3e2c35" strokeWidth="2" fill="none" />
    <path d="M0 16 H12 L6 24z" fill="#3e2c35" />
    <path d="M20 7 V18 L27 23" stroke="#3e2c35" strokeWidth="2" fill="none" />
  </svg>
);
const Wifi = () => (
  <svg width="42" height="30" viewBox="0 0 42 30" stroke="#3e2c35" strokeWidth="3" fill="none">
    <path d="M1.500 9.500 Q21 -6.500 40.500 9.500" />
    <path d="M8 15.500 Q21 5 34 15.500" />
    <path d="M14 21.500 Q21 16 28 21.500" />
    <path d="M21 29 L16.800 25 Q21 21.800 25.200 25z" fill="#3e2c35" stroke="none" />
  </svg>
);
const Flag = () => (
  <svg width="32" height="22" viewBox="0 0 32 22">
    <rect width="32" height="22" fill="#f7eeee" />
    {[0, 1, 2, 3, 4, 5, 6].map((i) => (
      <rect key={i} y={i * 3.38} width="32" height="1.700" fill="#b01c2a" />
    ))}
    <rect width="15" height="13.500" fill="#3b2c6c" />
    {[2, 4.600, 7.200, 9.800, 12].map((y, i) => (
      <path key={y} d={`M${i % 2 ? 2.5 : 1.5} ${y} H14`} stroke="#cfc6e0" strokeWidth=".9" strokeDasharray="1 1.400" />
    ))}
  </svg>
);
const Battery = () => (
  <svg width="46" height="24" viewBox="0 0 46 24">
    <rect x="1" y="1" width="39" height="22" rx="4" stroke="#3e2c35" strokeWidth="2" fill="none" />
    <rect x="4" y="4" width="31" height="16" rx="1" fill="#3e2c35" />
    <path d="M42 7.500 q4 4.500 0 9z" fill="#3e2c35" />
  </svg>
);
const Search = () => (
  <svg width="29" height="29" viewBox="0 0 29 29" stroke="#3e2c35" fill="none">
    <circle cx="11.500" cy="11.500" r="9.800" strokeWidth="2.200" />
    <path d="M18 18 L27.500 27.500" strokeWidth="3" />
  </svg>
);
const ListIcon = () => (
  <svg width="36" height="20" viewBox="0 0 36 20" stroke="#3e2c35" strokeWidth="3.600">
    <path d="M0 2 H4.500 M8 2 H36 M0 10 H4.500 M8 10 H30 M0 18 H4.500 M8 18 H36" />
  </svg>
);

/* ---------- data for the quiz ---------- */
const explanation = [
  ["Neural networks are good at finding statistical regularities that allow them to", 1000],
  ["recognize patterns. They are not good at flawlessly applying symbolic rules or storing", 1107],
  ["exact numbers.", 202],
];

const options = [
  { label: "Storing lists of names and birth dates.", w: 494 },
  { label: "Recognizing badly written characters.", w: 486, on: true },
  { label: "logical reasoning", w: 220 },
  { label: "Recognizing fragments of words in a pre-processed sound wave.", w: 839, on: true },
];

const menu = [
  ["Chrome", 111, 38, true], ["File", 46, 37], ["Edit", 51, 36], ["View", 61, 37], ["History", 93, 38],
  ["Bookmarks", 149, 37], ["People", 91, 37], ["Window", 107, 36], ["Help", 60, 36],
];

export default function App() {
  return (
    <Desktop>
      <GlobalStyle />
      <Gradients />
      <MenuBar>
        <MenuItems>
          <AppleMark><FaApple size={32} /></AppleMark>
          {menu.map(([name, w, gap, bold]) => (
            <MenuItem key={name} w={w} $gap={gap} $bold={bold}>{name}</MenuItem>
          ))}
        </MenuItems>
        <StatusItems>
          <StatusIcon $after={20}><TimeMachine /></StatusIcon>
          <StatusIcon $after={24}><Wifi /></StatusIcon>
          <StatusIcon><Flag /></StatusIcon>
          <StatusText w={52} $size={24} $margin="0 9px 0 25px" $weight={500}>96%</StatusText>
          <Battery />
          <StatusText w={263} $size={27} $margin="0 34px 0 28px" $weight={500}>Sun Aug 6  5:23 PM</StatusText>
          <StatusIcon $after={31}><Search /></StatusIcon>
          <ListIcon />
        </StatusItems>
      </MenuBar>

      <Workspace>
        <DockColumn>
          <Dock>
            {dockIcons.map((d, i) => (
              <DockArt key={i} dot={d.dot}>{d.art}</DockArt>
            ))}
            <DockDivider />
            {dockTail.map((art, i) => (
              <DockArt key={i}>{art}</DockArt>
            ))}
          </Dock>
        </DockColumn>

        <Window>
          <TabStrip>
            <Lights>
              <Light $color="#fa615b" $edge="#e04d47" />
              <Light $color="#fdbe41" $edge="#e0a032" />
              <Light $color="#34c84a" $edge="#27aa38" />
            </Lights>
            {tabs.map(([icon, title, active], i) => (
              <Tab key={i} icon={icon} title={title} active={active} z={active ? 40 : 30 - i} />
            ))}
            <NewTab>
              <svg width="67" height="33" viewBox="0 0 67 33">
                <path d="M4 1 H50 Q53 1 54 4 L65 29 Q66 32 63 32 H17 Q14 32 13 29 L2 4 Q1 1 4 1z" fill="#d0cfd0" stroke="#999" />
              </svg>
            </NewTab>
            <Account><MdAccountCircle size={37} /></Account>
          </TabStrip>

          <Toolbar>
            <NavIcon $w={56} $color="#5f5f5f"><MdArrowBack size={39} /></NavIcon>
            <NavIcon $w={57} $color="#d3d3d3"><MdArrowForward size={39} /></NavIcon>
            <NavIcon $w={56}><ReloadIcon /></NavIcon>
            <Omnibox>
              <MdLock size={24} color="#17803f" />
              <Secure w={91}>Secure</Secure>
              <Separator />
              <UrlPart w={67} $color="#17803f">https</UrlPart>
              <UrlPart w={28} $color="#808080">://</UrlPart>
              <UrlPart w={237} $color="#000">www.coursera.org</UrlPart>
              <UrlPart w={660} $color="#808080">/learn/neural-networks/exam/chgv2/lecture-1-quiz</UrlPart>
              <StarWrap><MdStarBorder size={36} /></StarWrap>
            </Omnibox>
            <NavIcon $w={70} $inset={21}><ReelIcon /></NavIcon>
            <svg width="44" height="28" viewBox="0 0 44 28" fill="#5a5a5a">
              <circle cx="23" cy="4" r="3.200" /><circle cx="23" cy="14" r="3.200" /><circle cx="23" cy="24" r="3.200" />
            </svg>
          </Toolbar>

          <BookmarkBar>
            <Bookmark $w={123} $gap={11}>
              <AppsIcon />
              <Fit w={61}>Apps</Fit>
            </Bookmark>
            {folders.map(([name, w, step]) => (
              <Bookmark key={name} $w={step}>
                <FolderIcon />
                <Fit w={w}>{name}</Fit>
              </Bookmark>
            ))}
            <More>»</More>
          </BookmarkBar>

          <PageHeader>
            <BackArrow>
              <svg width="42" height="42" viewBox="0 0 42 42" stroke="#1f1f1f" strokeWidth="4.600" fill="none" strokeLinecap="round" strokeLinejoin="round">
                <path d="M20.500 4 L3.500 21 L20.500 38 M3.500 21 H37.500" />
              </svg>
            </BackArrow>
            <Titles>
              <Title><Fit w={278}>Lecture <small>1</small> Quiz</Fit></Title>
              <Subtitle><Fit w={193}>Quiz, 6 questions</Fit></Subtitle>
            </Titles>
            <Score><Fit w={239}>6/6 points (100%)</Fit></Score>
          </PageHeader>

          <Quiz>
            <Grade>
              <GradeMark>
                <svg width="48" height="36" viewBox="0 0 48 36">
                  <path d="M2 16.500 L8 10.500 Q9.500 9.500 11 11 L18 18 L36 0.800 Q37.500 -0.200 39 1 L45 6.500 Q46.500 8 45 9.500 L20 33 Q18 34 16.500 33 L2 19.500 Q0.500 18 2 16.500z" fill={green} />
                </svg>
              </GradeMark>
              <Points>
                <div>1 / 1</div>
                <div>points</div>
              </Points>
            </Grade>
            <Number>4.</Number>
            <Question>
              <Prompt><Fit w={753}>Which of the following tasks are neural networks good at?</Fit></Prompt>
              {options.map((o) => (
                <React.Fragment key={o.label}>
                  <Option>
                    <Check $on={o.on} />
                    <Fit w={o.w}>{o.label}</Fit>
                  </Option>
                  <Pointer />
                  <Feedback>
                    <Verdict>
                      <Fit w={o.on ? 89 : 259}>{o.on ? "Correct" : "Un-selected is correct"}</Fit>
                    </Verdict>
                    {o.on && explanation.map(([t, w]) => (
                      <Line key={t}><Fit w={w}>{t}</Fit></Line>
                    ))}
                  </Feedback>
                </React.Fragment>
              ))}
            </Question>
          </Quiz>
          <EdgeShade />
          <ScrollThumb />
        </Window>
      </Workspace>
    </Desktop>
  );
}
